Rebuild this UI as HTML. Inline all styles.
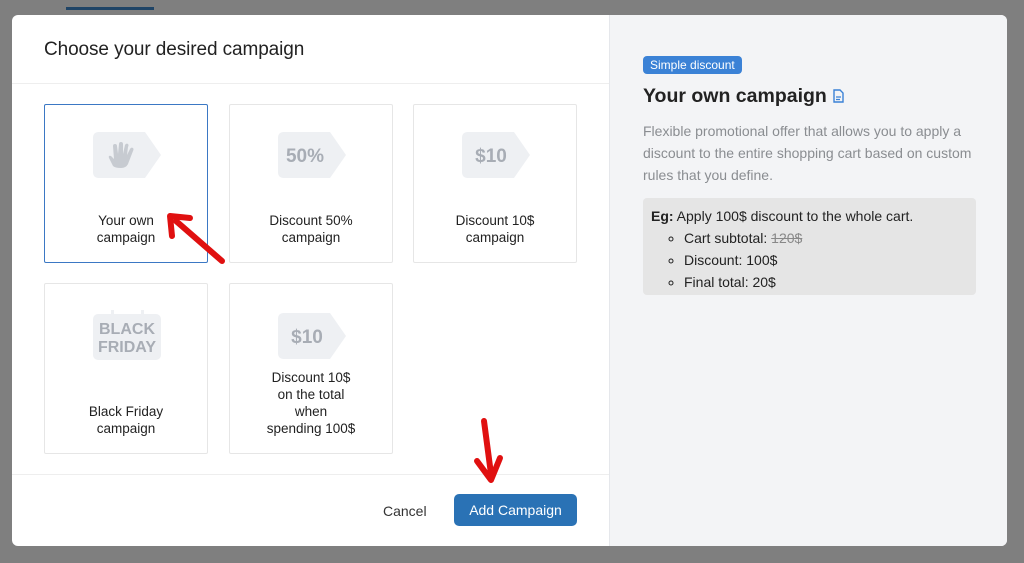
<!DOCTYPE html>
<html><head><meta charset="utf-8"><style>
*{box-sizing:border-box;margin:0;padding:0}
body{width:1024px;height:563px;background:#7f7f7f;font-family:"Liberation Sans",sans-serif;position:relative;overflow:hidden}
.topbar{position:absolute;left:66px;top:7px;width:88px;height:3px;background:#1f4466}
.modal{position:absolute;left:12px;top:15px;width:995px;height:531px;background:#fff;border-radius:6px;overflow:hidden}
.right{position:absolute;left:597px;top:0;width:398px;height:531px;background:#f3f4f6;border-left:1px solid #e5e7eb}
.title{position:absolute;left:32px;top:24px;font-size:19px;color:#222;letter-spacing:-0.1px}
.hline{position:absolute;left:0;width:597px;height:1px;background:#eeeeee}
.card{position:absolute;width:164px;border:1px solid #e6e6e6;border-radius:2px;background:#fff;text-align:center}
.card.sel{border:1.5px solid #3b78c4}
.card svg{position:absolute;left:48px}
.card .lbl{position:absolute;left:0;right:0;bottom:16px;font-size:13.5px;line-height:17px;color:#222}
.tagtxt{font-family:"Liberation Sans",sans-serif;font-weight:bold;font-size:19px;fill:#a8adb5}
.badge{position:absolute;left:33px;top:41px;background:#3b82d6;color:#fff;font-size:12px;padding:2px 7px;border-radius:4px}
.h2{position:absolute;left:33px;top:70px;font-size:19.5px;font-weight:bold;color:#222}
.desc{position:absolute;left:33px;top:105px;width:345px;font-size:14px;line-height:22px;color:#8a8d91}
.eg{position:absolute;left:33px;top:183px;width:333px;height:97px;background:#e5e5e5;border-radius:4px;padding:7px 8px;font-size:14px;line-height:22px;color:#222}
.eg ul{list-style:circle;padding-left:33px}
.cancel{position:absolute;left:371px;top:488px;font-size:14px;color:#333}
.btn{position:absolute;left:442px;top:479px;width:123px;height:32px;background:#2a72b5;border-radius:5px;color:#fff;font-size:14px;text-align:center;line-height:32px}
</style></head><body>
<div class="topbar"></div>
<div class="modal">
<div class="title">Choose your desired campaign</div>
<div class="hline" style="top:68px"></div>
<div class="hline" style="top:459px"></div>

<div class="card sel" style="left:32px;top:89px;height:159px">
<svg style="top:27px" width="68" height="46"><path d="M6 0H52L68 23L52 46H6Q0 46 0 40V6Q0 0 6 0Z" fill="#eef0f3"/>
<path d="M20 34 L16 26 Q15 23 18 24 L21 27 L20 14 Q20 12 22 12 Q24 12 24 14 L25 22 L26 12 Q26 10 28 10 Q30 10 30 12 L30 22 L32 13 Q33 11 35 12 Q36 13 35 15 L34 23 L37 17 Q38 15 40 16 Q41 17 40 19 L35 32 Q33 36 28 36 Q22 36 20 34Z" fill="#c7cbd1"/></svg>
<div class="lbl">Your own<br>campaign</div></div>

<div class="card" style="left:217px;top:89px;height:159px">
<svg style="top:27px" width="68" height="46"><path d="M6 0H52L68 23L52 46H6Q0 46 0 40V6Q0 0 6 0Z" fill="#eef0f3"/><text x="27" y="30" text-anchor="middle" class="tagtxt">50%</text></svg>
<div class="lbl">Discount 50%<br>campaign</div></div>

<div class="card" style="left:401px;top:89px;height:159px">
<svg style="top:27px" width="68" height="46"><path d="M6 0H52L68 23L52 46H6Q0 46 0 40V6Q0 0 6 0Z" fill="#eef0f3"/><text x="29" y="30" text-anchor="middle" class="tagtxt">$10</text></svg>
<div class="lbl">Discount 10$<br>campaign</div></div>

<div class="card" style="left:32px;top:268px;height:171px">
<svg style="top:26px" width="68" height="52"><rect x="0" y="4" width="68" height="46" rx="5" fill="#eef0f3"/><rect x="18" y="0" width="3" height="8" fill="#eef0f3"/><rect x="48" y="0" width="3" height="8" fill="#eef0f3"/>
<text x="34" y="24" text-anchor="middle" class="tagtxt" style="font-size:16px">BLACK</text><text x="34" y="42" text-anchor="middle" class="tagtxt" style="font-size:16px">FRIDAY</text></svg>
<div class="lbl">Black Friday<br>campaign</div></div>

<div class="card" style="left:217px;top:268px;height:171px">
<svg style="top:29px" width="68" height="46"><path d="M6 0H52L68 23L52 46H6Q0 46 0 40V6Q0 0 6 0Z" fill="#eef0f3"/><text x="29" y="30" text-anchor="middle" class="tagtxt">$10</text></svg>
<div class="lbl">Discount 10$<br>on the total<br>when<br>spending 100$</div></div>

<div class="cancel">Cancel</div>
<div class="btn">Add Campaign</div>

<div class="right">
<div class="badge">Simple discount</div>
<div class="h2">Your own campaign <svg width="13" height="14" viewBox="0 0 13 14" style="vertical-align:-1px"><path d="M2 1H8L11 4V13H2Z" fill="none" stroke="#3b82d6" stroke-width="1.4"/><path d="M4 8H9M4 10.5H8" stroke="#3b82d6" stroke-width="1.2"/></svg></div>
<div class="desc">Flexible promotional offer that allows you to apply a discount to the entire shopping cart based on custom rules that you define.</div>
<div class="eg"><b>Eg:</b> Apply 100$ discount to the whole cart.
<ul><li>Cart subtotal: <s style="color:#888">120$</s></li><li>Discount: 100$</li><li>Final total: 20$</li></ul></div>
</div>
</div>
<svg style="position:absolute;left:0;top:0" width="1024" height="563">
<g stroke="#e01010" stroke-width="6" stroke-linecap="round" fill="none" stroke-linejoin="round">
<path d="M222 261 L176 221"/><path d="M172 236 L170 216 L190 218"/>
<path d="M484 421 L491 474"/><path d="M477 461 L491 480 L500 458"/>
</g></svg>
</body></html>
